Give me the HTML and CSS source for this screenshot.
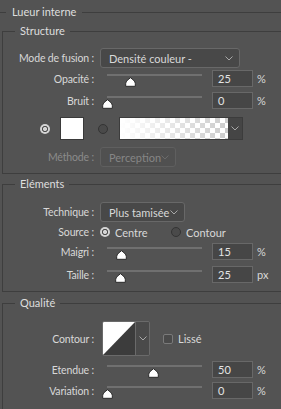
FILE: index.html
```html
<!DOCTYPE html>
<html lang="fr">
<head>
    <meta charset="UTF-8">
    <meta name="viewport" content="width=device-width, initial-scale=1.0">
    <title>Lueur interne</title>
    <link rel="stylesheet" href="styles.css">
</head>
<body>
    <div class="panel">
        <div class="title"><span>Lueur interne</span></div>

        <fieldset class="group">
            <legend>Structure</legend>
            <div class="row r-mode">
                <label class="lbl">Mode de fusion :</label>
                <div class="select w-mode"><span>Densité couleur -</span><svg class="chev" width="8" height="5" viewBox="0 0 8 5"><path d="M0.5 0.5 L4 4 L7.5 0.5"/></svg></div>
            </div>
            <div class="row r-opac">
                <label class="lbl">Opacité :</label>
                <div class="slider" style="--v: .25"><div class="track"></div><svg class="thumb" width="11" height="10" viewBox="0 0 11 10"><path d="M5.5 0.7 C7.5 2.4 10.3 4.2 10.3 6.5 L10.3 9.3 L0.7 9.3 L0.7 6.5 C0.7 4.2 3.5 2.4 5.5 0.7 Z"/></svg></div>
                <div class="num">25</div><span class="unit">%</span>
            </div>
            <div class="row r-bruit">
                <label class="lbl">Bruit :</label>
                <div class="slider" style="--v: 0"><div class="track"></div><svg class="thumb" width="11" height="10" viewBox="0 0 11 10"><path d="M5.5 0.7 C7.5 2.4 10.3 4.2 10.3 6.5 L10.3 9.3 L0.7 9.3 L0.7 6.5 C0.7 4.2 3.5 2.4 5.5 0.7 Z"/></svg></div>
                <div class="num">0</div><span class="unit">%</span>
            </div>
            <div class="row r-color">
                <span class="radio on"></span>
                <span class="swatch"></span>
                <span class="radio off r-grad"></span>
                <div class="gradbox"><span class="grad"></span><span class="gradarrow"><svg class="chev" width="8" height="5" viewBox="0 0 8 5"><path d="M0.5 0.5 L4 4 L7.5 0.5"/></svg></span></div>
            </div>
            <div class="row r-meth">
                <label class="lbl dim">Méthode :</label>
                <div class="select w-meth off"><span>Perception</span><svg class="chev" width="8" height="5" viewBox="0 0 8 5"><path d="M0.5 0.5 L4 4 L7.5 0.5"/></svg></div>
            </div>
        </fieldset>

        <fieldset class="group g-elem">
            <legend>Eléments</legend>
            <div class="row r-tech">
                <label class="lbl">Technique :</label>
                <div class="select w-tech"><span>Plus tamisée</span><svg class="chev" width="8" height="5" viewBox="0 0 8 5"><path d="M0.5 0.5 L4 4 L7.5 0.5"/></svg></div>
            </div>
            <div class="row r-src">
                <label class="lbl">Source :</label>
                <div class="opt o-centre"><span class="radio on"></span><span>Centre</span></div>
                <div class="opt"><span class="radio off"></span><span>Contour</span></div>
            </div>
            <div class="row r-maigri">
                <label class="lbl">Maigri :</label>
                <div class="slider" style="--v: .15"><div class="track"></div><svg class="thumb" width="11" height="10" viewBox="0 0 11 10"><path d="M5.5 0.7 C7.5 2.4 10.3 4.2 10.3 6.5 L10.3 9.3 L0.7 9.3 L0.7 6.5 C0.7 4.2 3.5 2.4 5.5 0.7 Z"/></svg></div>
                <div class="num">15</div><span class="unit">%</span>
            </div>
            <div class="row r-taille">
                <label class="lbl">Taille :</label>
                <div class="slider" style="--v: .14"><div class="track"></div><svg class="thumb" width="11" height="10" viewBox="0 0 11 10"><path d="M5.5 0.7 C7.5 2.4 10.3 4.2 10.3 6.5 L10.3 9.3 L0.7 9.3 L0.7 6.5 C0.7 4.2 3.5 2.4 5.5 0.7 Z"/></svg></div>
                <div class="num">25</div><span class="unit">px</span>
            </div>
        </fieldset>

        <fieldset class="group g-qual">
            <legend>Qualité</legend>
            <div class="row r-cont">
                <label class="lbl">Contour :</label>
                <div class="contour">
                    <svg class="curve" width="32" height="33" viewBox="0 0 32 33"><rect width="32" height="33" fill="#3c3c3c"/><path d="M0 0 H32 L0 33 Z" fill="#fff"/></svg>
                    <span class="contarrow"><svg class="chev" width="8" height="5" viewBox="0 0 8 5"><path d="M0.5 0.5 L4 4 L7.5 0.5"/></svg></span>
                </div>
                <span class="check"></span><span class="lisse">Lissé</span>
            </div>
            <div class="row r-eten">
                <label class="lbl">Etendue :</label>
                <div class="slider" style="--v: .49"><div class="track"></div><svg class="thumb" width="11" height="10" viewBox="0 0 11 10"><path d="M5.5 0.7 C7.5 2.4 10.3 4.2 10.3 6.5 L10.3 9.3 L0.7 9.3 L0.7 6.5 C0.7 4.2 3.5 2.4 5.5 0.7 Z"/></svg></div>
                <div class="num">50</div><span class="unit">%</span>
            </div>
            <div class="row r-var">
                <label class="lbl">Variation :</label>
                <div class="slider" style="--v: 0"><div class="track"></div><svg class="thumb" width="11" height="10" viewBox="0 0 11 10"><path d="M5.5 0.7 C7.5 2.4 10.3 4.2 10.3 6.5 L10.3 9.3 L0.7 9.3 L0.7 6.5 C0.7 4.2 3.5 2.4 5.5 0.7 Z"/></svg></div>
                <div class="num">0</div><span class="unit">%</span>
            </div>
        </fieldset>
    </div>
</body>
</html>
```

FILE: styles.css
```css
html, body { margin: 0; background: #535353; overflow: hidden; }
body { font-family: Lato, Roboto, sans-serif; font-size: 11px; color: #d8d8d8; white-space: nowrap; }
.panel { padding-top: 5px; width: 281px; }

.title { display: flex; align-items: center; line-height: 14px; color: #dedede; }
.title::before { content: ""; width: 6px; height: 1px; background: #3e3e3e; }
.title::after { content: ""; flex: 1; height: 1px; background: #3e3e3e; }
.title span { padding: 0 6px; }

.group { margin: 5px 0 0 2px; padding: 0 0 6px; border: 1px solid #3e3e3e; border-right: none; min-width: 0; }
.group legend { margin-left: 12px; padding: 0 5px; line-height: 14px; color: #dedede; }
.g-elem { margin-top: 3px; padding-bottom: 8px; }
.g-qual { margin-top: 4px; padding-bottom: 10px; border-bottom: none; }

.row { display: flex; align-items: center; height: 17px; }
.lbl { width: 91px; padding-right: 6px; text-align: right; flex: none; font-size: 10.5px; letter-spacing: -0.15px; }
.dim { color: #8b8b8b; }

.r-mode { margin-top: 10px; height: 20px; }
.r-opac { margin-top: 2px; }
.r-bruit { margin-top: 5px; }
.r-color { margin-top: 8px; height: 23px; }
.r-meth { margin-top: 7px; height: 20px; }
.r-tech { margin-top: 11px; height: 20px; }
.r-src { margin-top: 3px; height: 14px; }
.r-maigri { margin-top: 4px; }
.r-taille { margin-top: 6px; }
.r-cont { margin-top: 11px; height: 35px; }
.r-eten { margin-top: 5px; }
.r-var { margin-top: 4px; }

.select { box-sizing: border-box; height: 20px; display: flex; align-items: center; justify-content: space-between; padding: 0 6px 0 8px; background: #484848; border: 1px solid #686868; border-radius: 3px; }
.w-mode { width: 140px; }
.w-tech { width: 85px; }
.w-meth { width: 76px; border-color: #5f5f5f; background: #505050; color: #868686; }
.chev { fill: none; stroke: #a8a8a8; stroke-width: 1; }
.off .chev { stroke: #6e6e6e; }

.slider { position: relative; align-self: stretch; width: 107px; margin-left: 1px; }
.track { position: absolute; left: 6px; right: 6px; top: 4px; height: 2px; background: #707070; }
.thumb { position: absolute; bottom: 0; left: calc(6px + (100% - 12px) * var(--v)); margin-left: -5.5px; }
.thumb path { fill: #fff; stroke: #2a2a2a; stroke-width: 1; }

.num { box-sizing: border-box; width: 41px; height: 17px; margin-left: 4px; padding-left: 5px; line-height: 15px; background: #464646; border: 1px solid #686868; color: #e4e4e4; }
.unit { margin-left: 4px; }

.radio { box-sizing: border-box; width: 10px; height: 10px; border-radius: 50%; flex: none; }
.radio.on { background: radial-gradient(circle, #d4d4d4 0 1.8px, #4c4c4c 2.3px 2.8px, #d4d4d4 3.3px); }
.radio.off { background: #4a4a4a; border: 1px solid #343434; }

.r-color .radio.on { margin-left: 37px; }
.swatch { box-sizing: border-box; width: 24px; height: 23px; margin-left: 10px; background: #fff; border: 1px solid #3a3a3a; }
.r-grad { margin-left: 14px; }
.gradbox { display: flex; height: 23px; margin-left: 11px; border: 1px solid #3c3c3c; box-sizing: border-box; }
.grad { width: 108px; background: linear-gradient(to right, #fff 0%, rgba(255,255,255,0) 100%), repeating-conic-gradient(#cccccc 0 25%, #ffffff 0 50%) 0 0 / 10px 10px; }
.gradarrow { width: 14px; display: flex; align-items: center; justify-content: center; background: #454545; }

.opt { display: flex; align-items: center; gap: 4px; }
.o-centre { width: 71px; }
.opt .radio { margin-right: 1px; }

.contour { display: flex; height: 35px; box-sizing: border-box; margin-left: 2px; border: 1px solid #6a6a6a; border-radius: 2px; overflow: hidden; }
.curve { display: block; width: 32px; height: 33px; }
.contarrow { width: 13px; display: flex; align-items: center; justify-content: center; background: #4a4a4a; border-left: 1px solid #6a6a6a; }
.check { box-sizing: border-box; width: 10px; height: 10px; margin-left: 13px; border: 1px solid #7a7a7a; border-radius: 2px; background: #4a4a4a; }
.lisse { margin-left: 5px; }
```
